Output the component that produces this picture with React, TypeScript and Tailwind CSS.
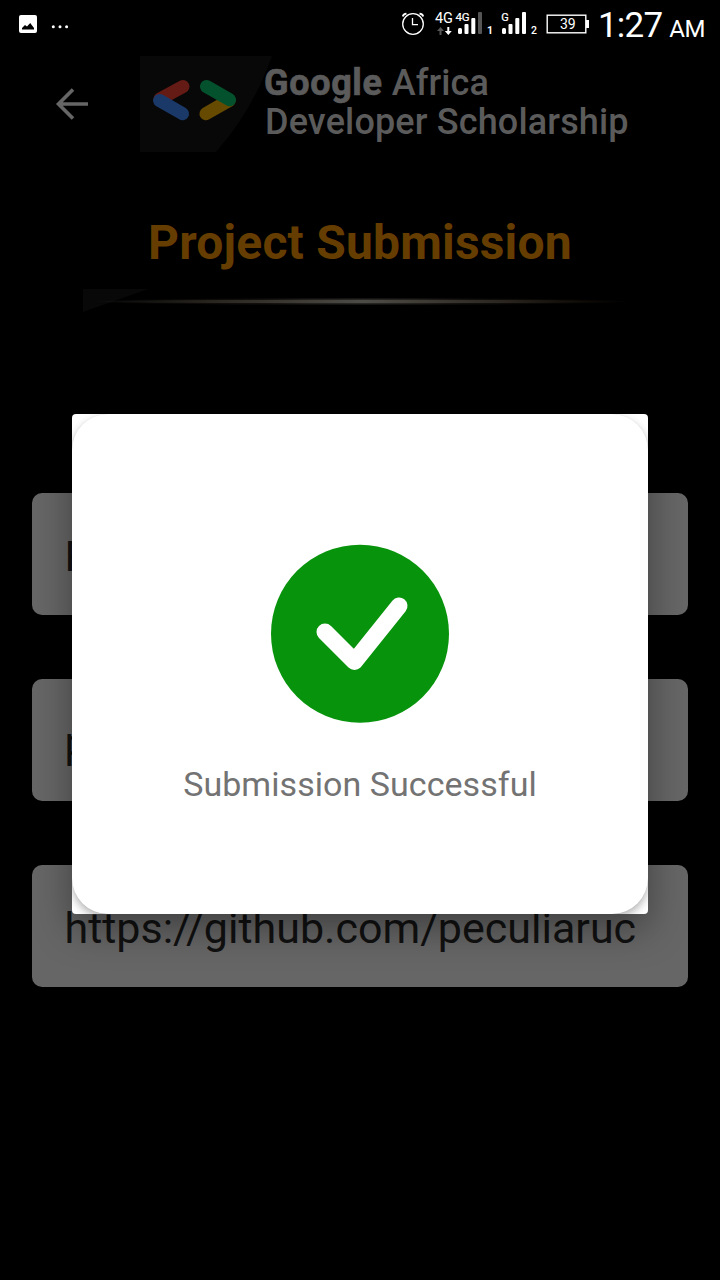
import React from "react";

function StatusBar() {
  return (
    <header className="flex h-12 w-full items-start text-white">
      <svg width="400" height="48" viewBox="0 0 400 48" aria-label="Notifications">
        <rect x="19" y="15" width="18" height="18" rx="2" fill="#fff" />
        <path d="M22 29.500v-1.500l3-3 2 1.600 3.200-3.600L34 28v1.500z" fill="#000" />
        <g fill="#fff">
          <circle cx="53.300" cy="26.700" r="1.500" />
          <circle cx="60" cy="26.700" r="1.500" />
          <circle cx="66.600" cy="26.700" r="1.500" />
        </g>
      </svg>
      <svg width="196" height="48" viewBox="400 0 196 48" fontFamily="Roboto, sans-serif" fill="#fff" aria-label="Connection and battery">
        <g fill="none" stroke="#fff" strokeWidth="1.300">
          <circle cx="413" cy="24" r="10.300" />
          <path d="M412.500 18v6.700h5.500" />
          <path d="M402.800 16.500q.5-2.500 3.700-2.800M423.200 16.500q-.5-2.500-3.700-2.800" strokeWidth="1.800" />
        </g>
        <text x="435" y="23" fontSize="14.500" textLength="18">4G</text>
        <path d="M440.500 27l-3.500 4h2.500v4h2v-4h2.500z" fill="#555" />
        <path d="M448.300 35l3.500-4h-2.500v-4h-2v4h-2.500z" />
        <text x="455.500" y="20.500" fontSize="11.500" textLength="14" stroke="#fff" strokeWidth="0.200">4G</text>
        <rect x="458" y="28" width="4" height="6" rx="1.500" />
        <rect x="464.500" y="24" width="4" height="10" rx="1" />
        <rect x="471.300" y="18" width="4" height="16" rx="1" />
        <rect x="478" y="12" width="4" height="22" rx="1" fill="#555" />
        <text x="487" y="34" fontSize="10.500" fontWeight="700">1</text>
        <text x="501.300" y="20.500" fontSize="11" stroke="#fff" strokeWidth="0.200">G</text>
        <rect x="502" y="28" width="4" height="6" rx="1.500" />
        <rect x="508.500" y="24" width="4" height="10" rx="1" />
        <rect x="515.300" y="18" width="4" height="16" rx="1" />
        <rect x="522" y="12" width="4" height="22" rx="1" />
        <text x="531" y="34" fontSize="10.500" fontWeight="500">2</text>
        <rect x="547.200" y="15.200" width="38.600" height="17.600" fill="none" stroke="#fff" strokeWidth="1.400" />
        <rect x="586" y="20" width="3" height="8" />
        <text x="560" y="29" fontSize="14">39</text>
      </svg>
      <div className="flex h-12 items-baseline whitespace-nowrap pl-[2px] pt-[5px] leading-[42px]">
        <span className="text-[35px] tracking-[-0.8px]">1:27</span>
        <span className="ml-[7px] text-[24px] tracking-[-0.5px]">AM</span>
      </div>
    </header>
  );
}

function ScholarshipBar() {
  return (
    <div className="flex h-28 pt-2">
      <button aria-label="Back" className="ml-12 h-24 w-12">
        <svg width="48" height="96" viewBox="48 56 48 96">
          <path d="M88 104H58M73 89.500L58.500 104L73 118.500" fill="none" stroke="#666" strokeWidth="3.600" />
        </svg>
      </button>
      <svg className="ml-11 shrink-0" width="132" height="96" viewBox="140 56 132 96" aria-label="Developer logo">
        <path d="M140 56h132q-19 54-56 96h-76z" fill="#080808" />
        <g fill="none" strokeWidth="13" strokeLinecap="round">
          <path d="M160 99L183 86.500" stroke="#651b15" />
          <path d="M159.600 100.500L182.500 113.700" stroke="#1b3968" />
          <path d="M229 100.500L206 113.700" stroke="#664a00" />
          <path d="M206.500 86.500L229.500 99.700" stroke="#04522d" />
        </g>
      </svg>
      <div className="-ml-[8px] mt-[8px] whitespace-nowrap text-[36px] leading-[39px] text-[#5b5b5b]">
        <p className="font-medium tracking-[0.1px]">
          <span className="font-bold tracking-[0.65px] [-webkit-text-stroke:0.7px_#5b5b5b]">Google</span> Africa
        </p>
        <p className="pl-px font-medium tracking-[0.15px]">Developer Scholarship</p>
      </div>
    </div>
  );
}

function Divider() {
  return (
    <svg className="mx-auto block" width="554" height="24" viewBox="83 289 554 24" aria-hidden="true">
      <defs>
        <linearGradient id="streak">
          <stop offset="0" stopColor="#4c4942" stopOpacity="0" />
          <stop offset="0.2" stopColor="#403a30" stopOpacity="0.5" />
          <stop offset="0.5" stopColor="#4e4c47" />
          <stop offset="0.75" stopColor="#403a30" stopOpacity="0.6" />
          <stop offset="1" stopColor="#302010" stopOpacity="0" />
        </linearGradient>
      </defs>
      <path d="M83 289h65L83 312z" fill="#080808" />
      <ellipse cx="363" cy="301.500" rx="270" ry="3.300" fill="url(#streak)" opacity="0.350" />
      <ellipse cx="363" cy="301.500" rx="270" ry="1.700" fill="url(#streak)" />
    </svg>
  );
}

function Field({ value }: { value: string }) {
  return (
    <div className="flex h-[122px] items-center overflow-hidden rounded-[10px] bg-[#666] pl-[32.500px] pt-[4px] text-[43px] text-[#111]">
      <span className="whitespace-nowrap">{value}</span>
    </div>
  );
}

function SuccessDialog() {
  return (
    <div
      role="dialog"
      aria-label="Submission Successful"
      className="absolute left-[72px] top-[414px] h-[500px] w-[576px] overflow-hidden rounded-[4px] bg-white"
    >
      <div className="flex h-full flex-col items-center rounded-[36px] bg-white pt-[130px] shadow-[0_4px_8px_rgba(0,0,0,0.3),0_0_1px_rgba(0,0,0,0.1)]">
        <svg width="180" height="180" viewBox="270 544 180 180" aria-hidden="true">
          <circle cx="360" cy="633.800" r="89" fill="#07930b" />
          <path d="M325 632L354.500 661.500L399 606" fill="none" stroke="#fff" strokeWidth="17" strokeLinecap="round" strokeLinejoin="round" />
        </svg>
        <p className="mt-[39px] text-[34px] leading-[42px] tracking-[0.05px] text-[#737373]">Submission Successful</p>
      </div>
    </div>
  );
}

export default function App() {
  return (
    <div className="relative h-[1280px] w-[720px] overflow-hidden bg-black font-['Roboto',sans-serif]">
      <StatusBar />
      <ScholarshipBar />
      <main>
        <h1 className="mt-[55px] text-center text-[48px] font-bold leading-[56px] tracking-[0.2px] text-[#663d00]">Project Submission</h1>
        <div className="mt-[18px]">
          <Divider />
        </div>
        <div className="mt-[180px] flex flex-col gap-16 px-8">
          <Field value="P" />
          <Field value="p" />
          <Field value="https://github.com/peculiaruc" />
        </div>
      </main>
      <div className="absolute left-[72px] top-[414px] h-[500px] w-[576px] rounded-[4px] shadow-[0_14px_38px_rgba(0,0,0,0.38)]" />
      <SuccessDialog />
    </div>
  );
}
